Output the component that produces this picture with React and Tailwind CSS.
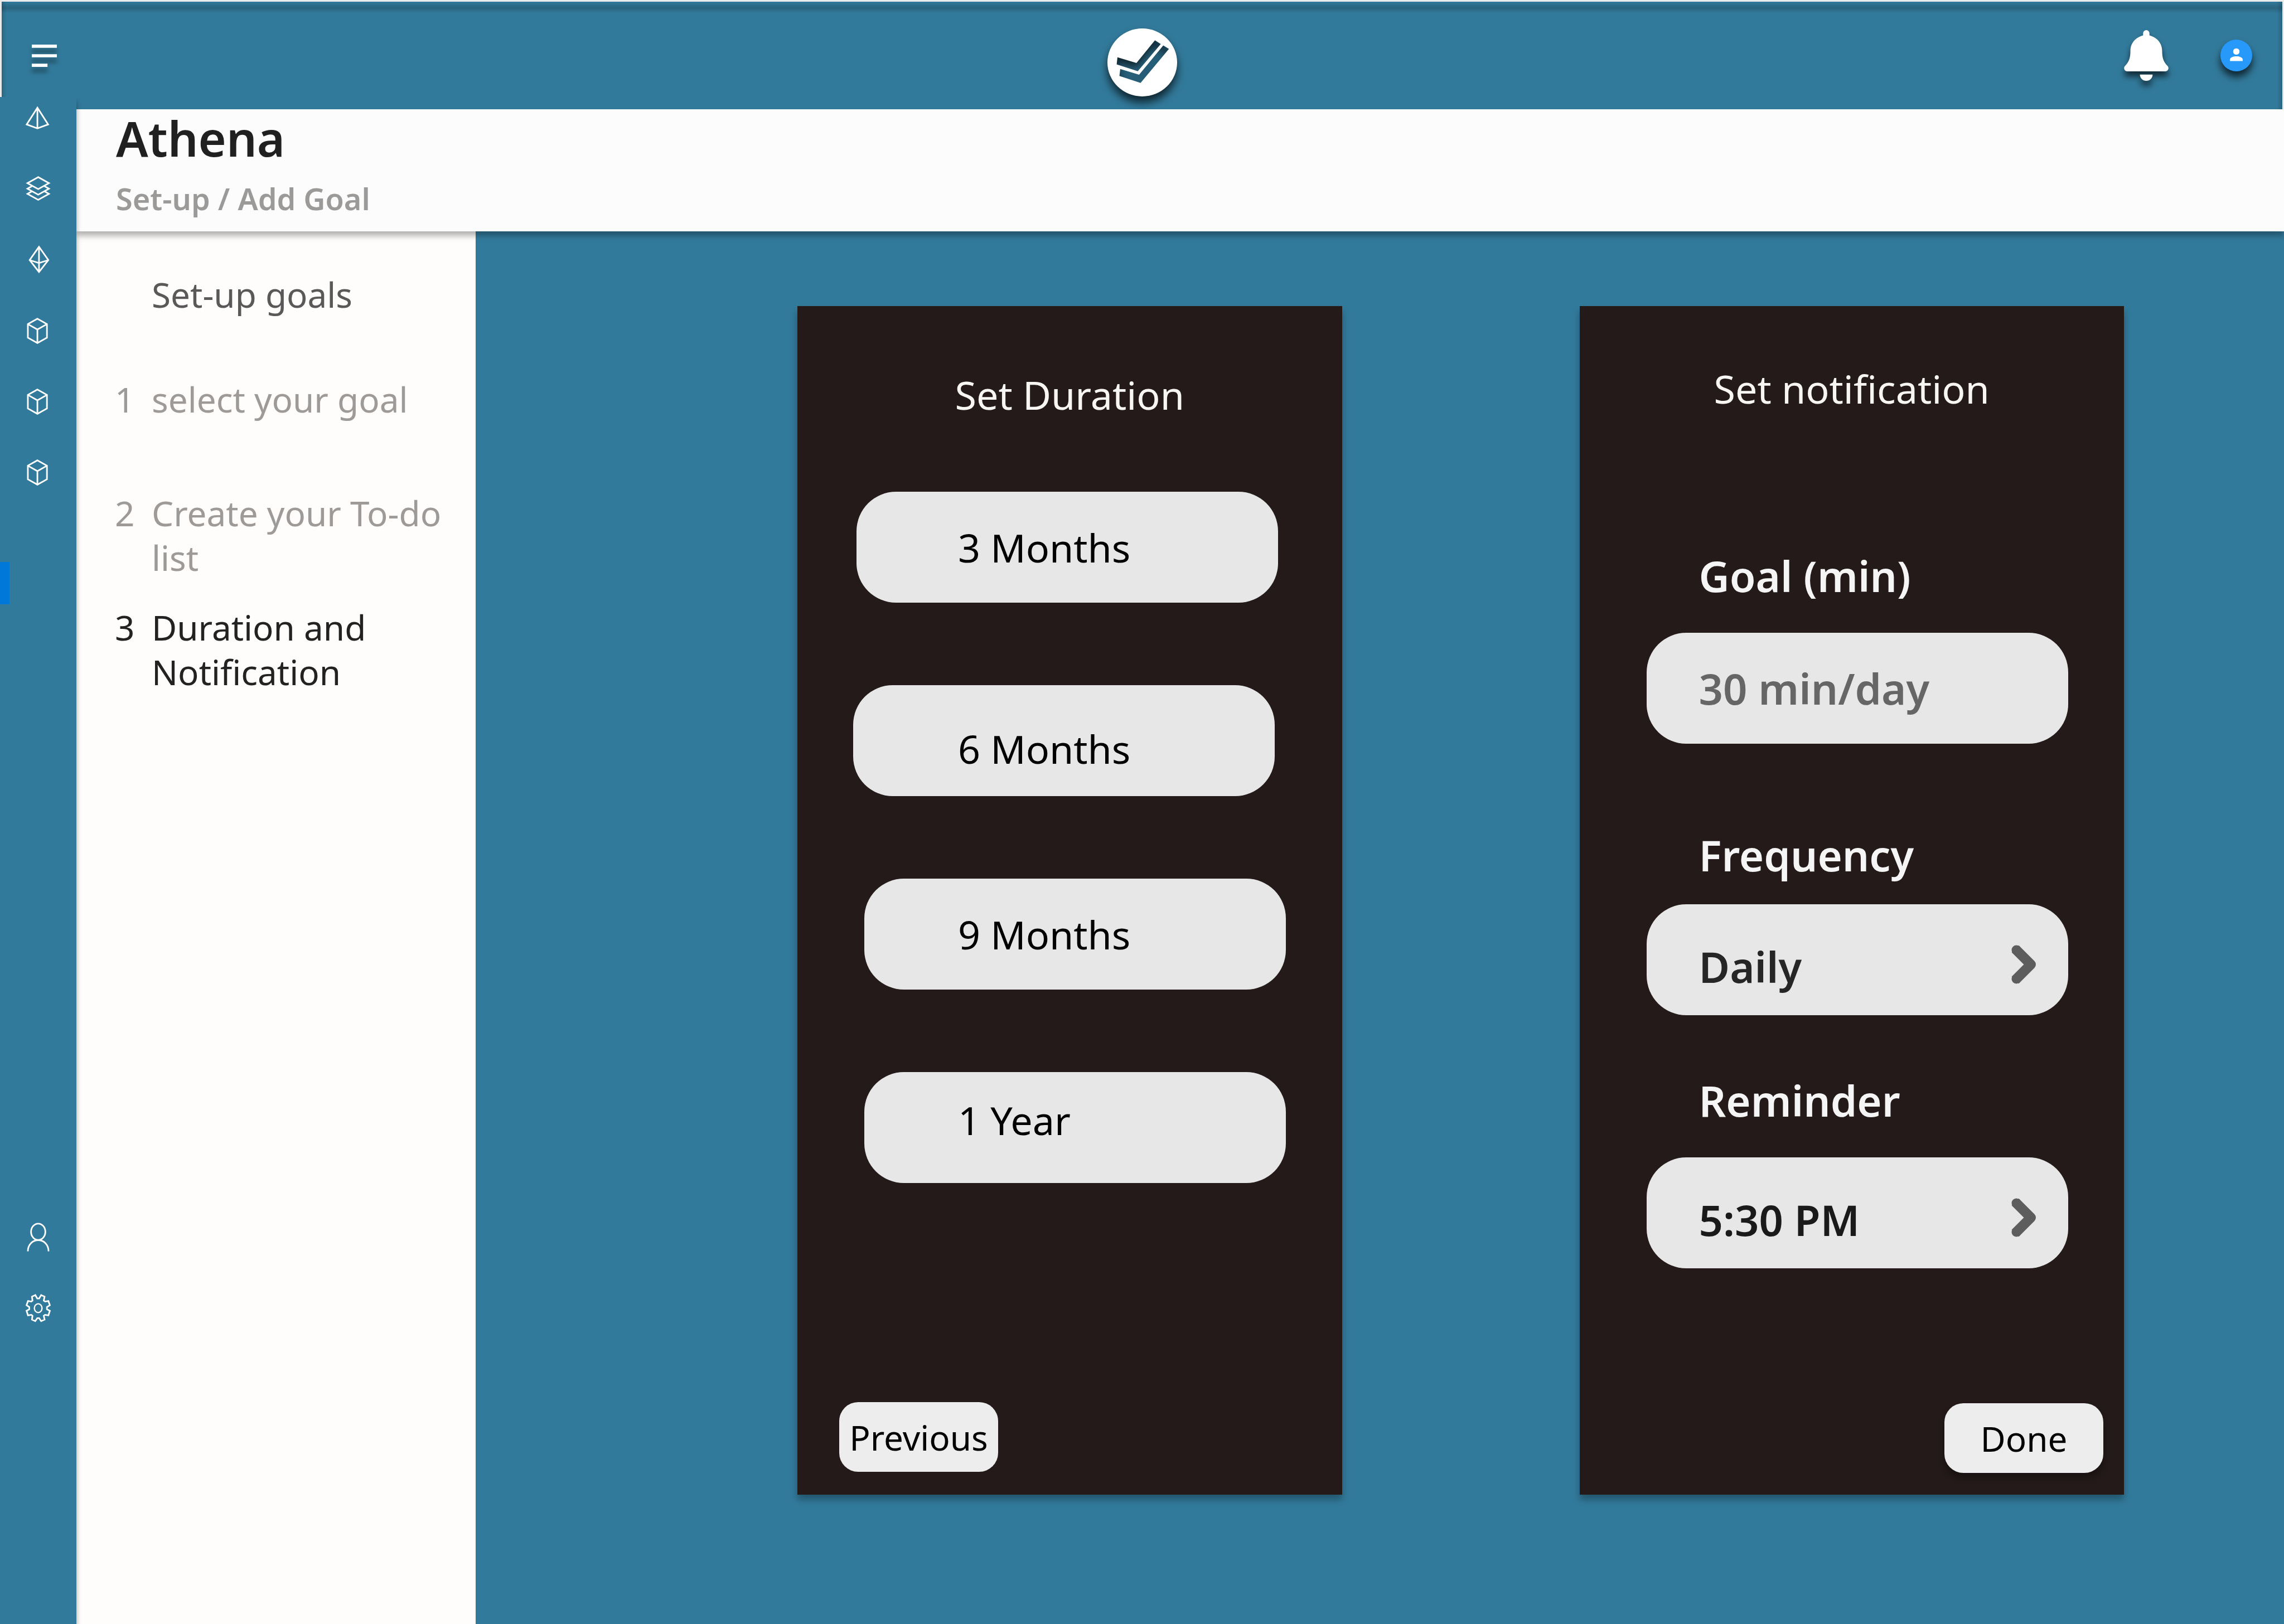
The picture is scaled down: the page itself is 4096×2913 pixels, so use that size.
import React from "react";

/* Line icons of the side rail. All share one 192 x 108 canvas, as wide as the rail. */
function RailIcon({ children }) {
  return (
    <svg viewBox="0 0 192 108" className="h-full w-full" fill="none" stroke="#ffffff" strokeWidth="4" aria-hidden="true">
      {children}
    </svg>
  );
}

const Pyramid = () => (
  <RailIcon>
    <path d="M94 27 L67 69 L94 79 L121 69 Z M94 27 V79" />
  </RailIcon>
);

const Layers = () => (
  <RailIcon>
    <path d="M96 23.5 L69 38.5 L96 53.5 L123 38.5 Z" />
    <path d="M80.5 46 L69 52.5 L96 67.5 L123 52.5 L111.5 46" />
    <path d="M80.5 59 L69 65.5 L96 80.5 L123 65.5 L111.5 59" />
  </RailIcon>
);

const Diamond = () => (
  <RailIcon>
    <path d="M98 20.5 L74.5 54 L98 84 L121.5 54 Z M98 20.5 V84 M74.5 54 L98 61.5 L121.5 54" />
  </RailIcon>
);

const Cube = () => (
  <RailIcon>
    <path d="M94 23.5 L118 37 V71 L94 84.5 L70 71 V37 Z M70 37 L94 50.5 L118 37 M94 50.5 V84.5" />
  </RailIcon>
);

const Person = () => (
  <RailIcon>
    <ellipse cx="96" cy="40" rx="18" ry="20.5" />
    <path d="M70 89 C70 72 82 61 96 61 C110 61 122 72 122 89" />
  </RailIcon>
);

const Gear = () => (
  <RailIcon>
    <g transform="scale(0.33333) translate(0 -739)" strokeWidth="12">
      <path d="M266 802 L241 814 L245 844 L236 851 L211 847 L200 879 L221 893 V909 L200 921 L211 955 L236 951 L245 958 L241 987 L266 999 L281 976 H295 L310 999 L336 987 L330 958 L340 951 L365 955 L376 921 L354 909 V893 L376 879 L365 847 L340 851 L330 844 L336 814 L310 802 L295 828 H281 Z" />
      <ellipse cx="288" cy="901" rx="29" ry="33" strokeWidth="10" />
    </g>
  </RailIcon>
);

const topNav = [
  { name: "Pyramid", Icon: Pyramid },
  { name: "Layers", Icon: Layers },
  { name: "Diamond", Icon: Diamond },
  { name: "Cube one", Icon: Cube },
  { name: "Cube two", Icon: Cube },
  { name: "Cube three", Icon: Cube },
];

const bottomNav = [
  { name: "Account", Icon: Person },
  { name: "Settings", Icon: Gear },
];

function NavList({ items, label }) {
  return (
    <nav aria-label={label} className="flex flex-col gap-[50px]">
      {items.map(({ name, Icon }) => (
        <button key={name} type="button" aria-label={name} className="h-[77px] w-full">
          <Icon />
        </button>
      ))}
    </nav>
  );
}

function Rail() {
  return (
    <aside className="relative z-20 -mt-[22px] flex w-[137px] shrink-0 flex-col bg-[#327a9b] pb-[528px] shadow-[1px_8px_8px_rgba(0,0,0,0.3)] [clip-path:inset(0_-12px_0_0)]">
      <NavList items={topNav} label="Sections" />
      <div className="mt-[122px] h-[76px] w-[17px] bg-[#0078d9]" />
      <div className="mt-auto">
        <NavList items={bottomNav} label="Account" />
      </div>
    </aside>
  );
}

function MenuIcon() {
  return (
    <svg viewBox="0 0 64 56" className="h-[40px] w-[45px] overflow-visible drop-shadow-[0_9px_4px_rgba(0,0,0,0.45)]" fill="#ffffff" preserveAspectRatio="none" aria-hidden="true">
      <path d="M0 0 H64 V8 H0 Z M0 24 H64 V32 H0 Z M0 48 H40 V56 H0 Z" />
    </svg>
  );
}

function Logo() {
  return (
    <svg viewBox="276 216 528 515" className="mt-6 h-[122px] w-[125px] overflow-visible drop-shadow-[0_11px_8px_rgba(0,0,0,0.7)]" role="img" aria-label="Athena">
      <path
        fill="#ffffff"
        fillRule="evenodd"
        d="M540 216 A264 257.5 0 0 1 540 731 A264 257.5 0 0 1 540 216 Z M352 434 L496 478 L636 306 L680 334 L506 540 L346 488 Z M373 523 L516 566 L699 345 L742 371 L527 629 L367 576 Z"
      />
    </svg>
  );
}

function Bell() {
  return (
    <svg viewBox="288 228 336 384" className="h-[91px] w-[80px] overflow-visible drop-shadow-[0_9px_6px_rgba(0,0,0,0.65)]" fill="#ffffff" aria-hidden="true">
      <path d="M432 268 V252 A24 24 0 0 1 480 252 V268 C538 283 576 328 576 384 C576 440 588 470 616 498 C632 514 622 540 600 540 H312 C290 540 280 514 296 498 C324 470 336 440 336 384 C336 328 374 283 432 268 Z" />
      <path d="M408 564 H504 A48 48 0 0 1 408 564 Z" />
    </svg>
  );
}

function Avatar() {
  return (
    <svg viewBox="0 0 240 240" className="h-[57px] w-[57px] overflow-visible drop-shadow-[0_10px_7px_rgba(0,0,0,0.7)]" aria-hidden="true">
      <circle cx="120" cy="120" r="120" fill="#2699fb" />
      <circle cx="120" cy="90" r="24" fill="#ffffff" />
      <path d="M72 162 V150 C72 134 98 126 120 126 C142 126 168 134 168 150 V162 Z" fill="#ffffff" />
    </svg>
  );
}

function TopBar() {
  return (
    <header className="h-[196px] border-x-[3px] border-t-[3px] border-[#ebebeb] bg-[#327a9b] bg-[linear-gradient(to_bottom,transparent_0px,rgba(0,0,0,0.18)_11px,transparent_21px),linear-gradient(to_right,rgba(0,0,0,0.15),transparent_9px),linear-gradient(to_left,rgba(0,0,0,0.18),transparent_10px)]">
      <div className="grid h-full grid-cols-[1fr_auto_1fr] items-center pr-[54px] pl-[54px]">
        <button type="button" aria-label="Menu" className="justify-self-start">
          <MenuIcon />
        </button>
        <Logo />
        <div className="flex items-center gap-[93px] justify-self-end">
          <button type="button" aria-label="Notifications">
            <Bell />
          </button>
          <button type="button" aria-label="Profile">
            <Avatar />
          </button>
        </div>
      </div>
    </header>
  );
}

function Step({ number, children, className }) {
  return (
    <li className={"flex " + className}>
      <span className="w-[66px] shrink-0">{number}</span>
      <span>{children}</span>
    </li>
  );
}

function Steps() {
  return (
    <section className="w-[716px] shrink-0 bg-[#fefdfc] pt-[73px] pl-[69px] text-[62px] leading-[80px]">
      <h2 className="pl-[66px] text-[#5a5858]">Set-up goals</h2>
      <ol className="mt-[108px] text-[#9d9a98]">
        <Step number="1" className="mb-[124px]">select your goal</Step>
        <Step number="2" className="mb-[45px]">Create your To-do<br />list</Step>
        <Step number="3" className="text-[#222222]">Duration and<br />Notification</Step>
      </ol>
    </section>
  );
}

const durations = [
  { label: "3 Months", className: "ml-[106px] pl-[182px]" },
  { label: "6 Months", className: "ml-[100px] pl-[188px] pt-7" },
  { label: "9 Months", className: "ml-[120px] pl-[168px]" },
  { label: "1 Year", className: "ml-[120px] pl-[168px] pb-7" },
];

function DurationCard() {
  return (
    <section className="flex flex-col bg-[#231a19] pt-[119px] pb-[41px] shadow-[0_9px_12px_rgba(0,0,0,0.3)]">
      <h2 className="text-center text-[70px] leading-[80px] text-[#f8f6f5]">Set Duration</h2>
      <div className="mt-[134px] flex flex-col gap-[148px]">
        {durations.map((d) => (
          <button
            key={d.label}
            type="button"
            className={"flex h-[199px] w-[756px] items-center rounded-[71px] bg-[#e7e7e7] text-[70px] leading-[80px] text-black " + d.className}
          >
            {d.label}
          </button>
        ))}
      </div>
      <button type="button" className="mt-auto ml-[75px] h-[125px] w-[285px] rounded-[34px] bg-[#ededed] text-[62px] leading-[80px] text-black">
        Previous
      </button>
    </section>
  );
}

function Chevron() {
  return (
    <svg viewBox="0 0 46 72" className="h-[72px] w-[46px] shrink-0" fill="none" stroke="#5d5d5d" strokeWidth="18" strokeLinejoin="round" aria-hidden="true">
      <path d="M7 8 L35 36 L7 64" />
      <path d="M9 10 L10 11 M9 62 L10 61" strokeLinecap="round" strokeWidth="17" />
    </svg>
  );
}

function PickerRow({ id, labelId, value, className }) {
  return (
    <button
      id={id}
      type="button"
      aria-labelledby={labelId + " " + id}
      className={"flex h-[199px] w-full items-center justify-between rounded-[71px] bg-[#e7e7e7] pt-4 pr-[56px] pl-[94px] text-[76px] leading-[80px] font-semibold " + className}
    >
      <span className="pt-2">{value}</span>
      <Chevron />
    </button>
  );
}

function NotificationCard() {
  return (
    <section className="flex flex-col bg-[#231a19] pt-[108px] pr-[100px] pb-[39px] pl-[120px] shadow-[0_9px_12px_rgba(0,0,0,0.3)]">
      <h2 className="-ml-5 text-center text-[70px] leading-[80px] text-[#f8f6f5]">Set notification</h2>

      <label htmlFor="goal" className="mt-[256px] pl-[94px] text-[76px] leading-[80px] font-semibold text-[#f6f5f5]">Goal (min)</label>
      <input
        id="goal"
        type="text"
        defaultValue="30 min/day"
        className="mt-[62px] h-[199px] w-full rounded-[71px] bg-[#e7e7e7] px-[94px] text-[76px] leading-[80px] font-semibold text-[#666666]"
      />

      <span id="frequency-label" className="mt-[160px] pl-[94px] text-[76px] leading-[80px] font-semibold text-[#f6f5f5]">Frequency</span>
      <div className="mt-[48px]">
        <PickerRow id="frequency" labelId="frequency-label" value="Daily" className="text-[#262626]" />
      </div>

      <span id="reminder-label" className="mt-[113px] pl-[94px] text-[76px] leading-[80px] font-semibold text-[#f6f5f5]">Reminder</span>
      <div className="mt-[62px]">
        <PickerRow id="reminder" labelId="reminder-label" value="5:30 PM" className="text-[#1a1a1a]" />
      </div>

      <button type="button" className="-mr-[63px] mt-auto h-[125px] w-[285px] self-end rounded-[34px] bg-[#ededed] text-[62px] leading-[80px] text-black shadow-[0_9px_12px_rgba(0,0,0,0.3)]">
        Done
      </button>
    </section>
  );
}

export default function App() {
  return (
    <div className="flex min-h-screen flex-col bg-[#327a9b] font-['Noto_Sans','Open_Sans',sans-serif]">
      <TopBar />
      <div className="flex flex-1">
        <Rail />
        <div className="flex min-w-0 flex-1 flex-col">
          <div className="relative z-10 bg-[#fcfcfc] pt-1 pb-[27px] pl-[71px] font-semibold shadow-[0_8px_10px_rgba(0,0,0,0.3)]">
            <h1 className="text-[86px] leading-[96px] text-[#202020]">Athena</h1>
            <p className="mt-7 text-[54px] leading-[64px] text-[#9b9a98]">Set-up / Add Goal</p>
          </div>
          <div className="flex flex-1">
            <Steps />
            <main className="grid flex-1 grid-cols-2 gap-[426px] pt-[134px] pr-[287px] pb-[232px] pl-[577px]">
              <DurationCard />
              <NotificationCard />
            </main>
          </div>
        </div>
      </div>
    </div>
  );
}
